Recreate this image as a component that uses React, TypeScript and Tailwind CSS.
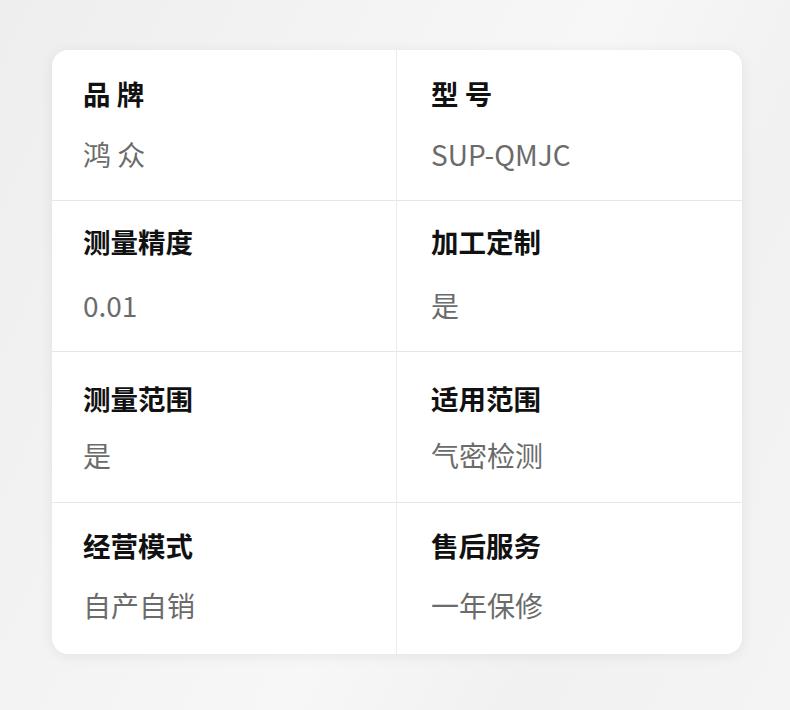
import React from "react";

const rows = [
  [
    { label: "品 牌", value: "鸿 众" },
    { label: "型 号", value: "SUP-QMJC" },
  ],
  [
    { label: "测量精度", value: "0.01" },
    { label: "加工定制", value: "是" },
  ],
  [
    { label: "测量范围", value: "是" },
    { label: "适用范围", value: "气密检测" },
  ],
  [
    { label: "经营模式", value: "自产自销" },
    { label: "售后服务", value: "一年保修" },
  ],
];

const labelTop = ["pt-[25px]", "pt-[22px]", "pt-[28px]", "pt-[24px]"];
const gapTop = ["mt-[25px]", "mt-[28px]", "mt-[21px]", "mt-[24px]"];

export default function App() {
  return (
    <div
      className="w-[790px] h-[710px] overflow-hidden bg-[linear-gradient(115deg,#eeeeee_0%,#f3f3f3_30%,#f7f7f7_55%,#f1f1f1_75%,#f4f4f4_100%)] pt-[50px] pl-[52px]"
      style={{ fontFamily: '"Noto Sans CJK SC", "Noto Sans", sans-serif' }}
    >
      <div className="w-[690px] rounded-[16px] bg-white shadow-[0_2px_14px_rgba(0,0,0,0.07)] overflow-hidden">
        {rows.map((row, i) => (
          <div
            key={i}
            className={`grid grid-cols-[345px_345px] h-[151px] ${i < rows.length - 1 ? "border-b border-[#e6e6e6]" : ""}`}
          >
            {row.map((cell, j) => (
              <div
                key={j}
                className={`${j === 0 ? "border-r border-[#ececec] pl-[31px]" : "pl-[34px]"} ${labelTop[i]}`}
              >
                <div className="text-[27.5px] leading-[36px] font-bold text-[#111111]">{cell.label}</div>
                <div className={`text-[28px] leading-[36px] text-[#6b6b6b] ${gapTop[i]}`}>{cell.value}</div>
              </div>
            ))}
          </div>
        ))}
      </div>
    </div>
  );
}
